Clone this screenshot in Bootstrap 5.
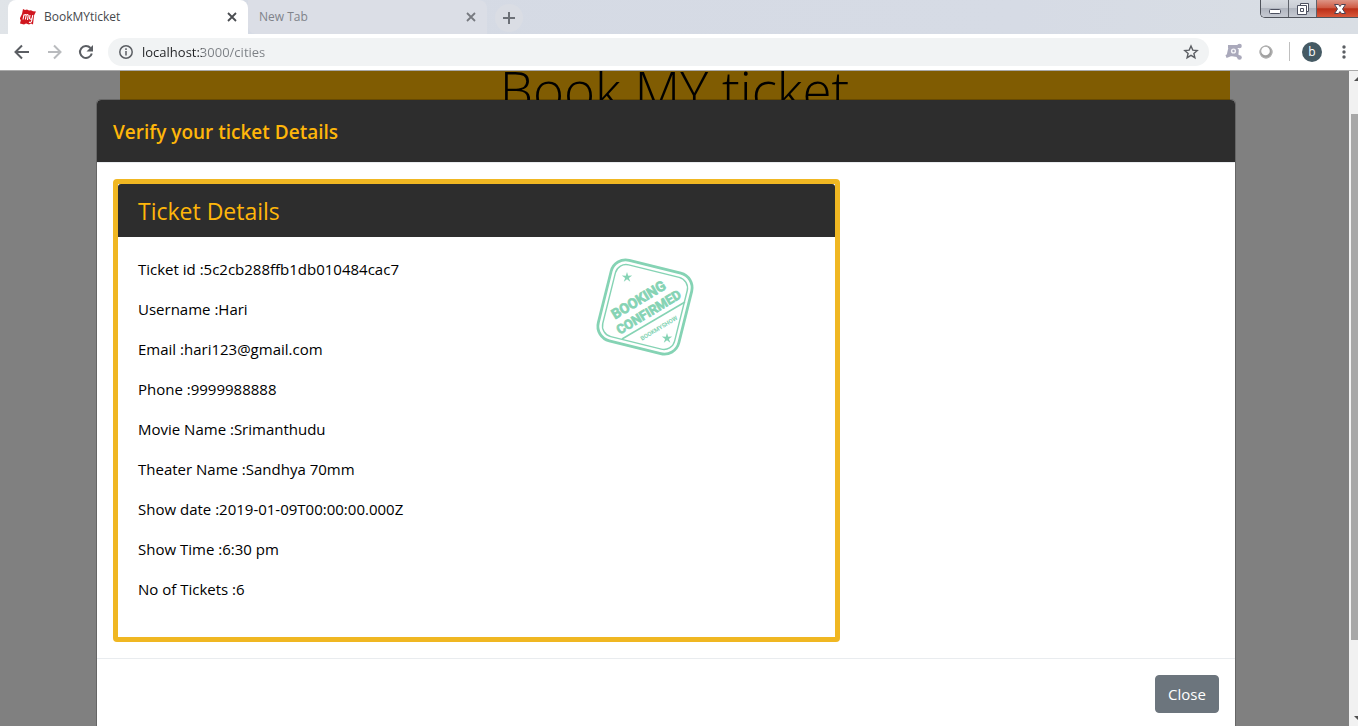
<!DOCTYPE html>
<html lang="en">
<head>
<meta charset="utf-8">
<meta name="viewport" content="width=device-width, initial-scale=1">
<title>BookMYticket</title>
<link href="https://cdn.jsdelivr.net/npm/bootstrap@5.3.0/dist/css/bootstrap.min.css" rel="stylesheet">
<style>
body{font-family:"Open Sans","Noto Sans",sans-serif;font-size:15px;line-height:24px;color:#000}
button{padding:0;border:0;background:none}
svg{display:block;flex:none}
.tab-strip{height:34px;background:linear-gradient(90deg,#e0e4e8 0,#d5dae4 20%,#d6dbe5 75%,#d9dee4 100%);padding-left:8px;font-size:12px}
.tab-item{width:240px;height:34px;padding:0 10px 0 12px;color:#80838a}
.tab-item .tab-name{font-size:12px;color:inherit}
.tab-item.current{background:#fff;border-radius:8px 8px 0 0;color:#45484c}
.tab-item.idle{background:#dbdee6;border-radius:0 8px 0 8px;padding-left:11px;width:239px}
.new-tab{width:28px;height:28px;margin-left:8px;border-radius:50%;background:#dadde4}
.win-keys{height:18px;border:1px solid #4f535b;border-width:0 0 1px 1px;border-radius:0 0 0 5px;overflow:hidden}
.win-keys button{height:17px;width:28px;background:linear-gradient(#d5d9df 0,#c9cdd4 45%,#b0b5bf 50%,#c6cad2 100%);border-right:1px solid #5f636b}
.win-keys button.quit{width:41px;border:0;background:linear-gradient(#dd9486 0,#cf5b45 45%,#bb2f18 52%,#d9583a 100%);padding-left:4px}
.tool-row{height:37px;background:#fff;border-bottom:1px solid #a9a9a9;padding:0 9px 1px 12px}
.omni{height:28px;border-radius:14px;background:#f1f3f4;padding:0 10px}
.omni input{border:0;outline:0;padding:0;font-size:13px;height:20px;-webkit-text-fill-color:transparent;background:linear-gradient(90deg,#202124 60px,#7b7f84 60px);-webkit-background-clip:text;background-clip:text}
.avatar{width:20px;height:20px;margin:0 17px 0 12px;border-radius:50%;background:#455a64;color:#fff;font-size:12px;line-height:19px}
.site{background:#808080;overflow:hidden;min-height:0}
.site-scroll{width:9px;background:#f1f1f1;overflow:hidden}
.site-scroll .thumb{width:17px;margin-left:2px;background:#a8a8a8;flex:0 0 526px}
.banner{max-width:1110px;height:60px;background:#805c02;color:#000}
.banner h1{font-size:53px;line-height:60px;font-weight:300;margin-top:-11px}
.sheet{inset:0;overflow:hidden;padding:28px 17px 0 0}
.sheet .modal-content{max-width:1140px;border:1px solid rgba(0,0,0,.2);border-radius:5px;background:#fff padding-box;color:#000}
.modal-header{background:#2d2d2d;color:#ffb60a;padding:17px 16px 15px;border-bottom:1px solid #e9ecef;border-radius:4px 4px 0 0}
.modal-header h2{font-size:19px;line-height:30px;font-weight:600}
.modal-body{padding:16px}
.modal-body .row{--bs-gutter-x:30px}
.modal-body .row.g-0{--bs-gutter-x:0}
.ticket{border:5px solid #f0b722;border-radius:4px;color:#000}
.ticket .card-header{background:#2d2d2d;color:#ffb60a;padding:13px 20px 11px;border:0;border-radius:3px 3px 0 0}
.ticket h3{font-size:23px;line-height:29px;font-weight:400}
.ticket .card-body{padding:20px}
.modal-footer{padding:16px;border-top:1px solid #e9ecef}
.modal-footer .btn{width:64px;height:38px;padding:0;border-radius:4px;font-size:15px}
</style>
</head>
<body class="vh-100 d-flex flex-column overflow-hidden">
<header>
  <div class="tab-strip d-flex align-items-start">
    <div class="tab-item current d-flex align-items-center">
      <svg width="16" height="16" viewBox="0 0 16 16"><path d="M3 0l2 1 2-.5 2 1 2-.3 2 1 3 .3-2 4-1 9-2-1-2 1-3-1-2 1-4-1 1-4-2 .5L2 5z" fill="#d0161f"/><path d="M3 10.500l1-5M3.900 6.500q1.800-2 2.200 0l-.7 4M6 6.500q1.800-2 2.200 0l-.7 4.500M10 6l-.5 3.500q1 1.500 2.500 0l.8-3.500-1.300 6.500q-1 1.500-2.500.5" fill="none" stroke="#fff" stroke-width="1.100"/></svg>
      <button class="tab-name flex-grow-1 text-start ms-2" type="button">BookMYticket</button>
      <button type="button" aria-label="Close tab"><svg width="12" height="12" viewBox="0 0 12 12"><path d="M2 2l8 8M10 2l-8 8" stroke="#4a4d51" stroke-width="1.800"/></svg></button>
    </div>
    <div class="tab-item idle d-flex align-items-center">
      <button class="tab-name flex-grow-1 text-start" type="button">New Tab</button>
      <button type="button" aria-label="Close tab"><svg width="12" height="12" viewBox="0 0 12 12"><path d="M2 2l8 8M10 2l-8 8" stroke="#777a80" stroke-width="1.800"/></svg></button>
    </div>
    <button class="new-tab d-flex align-items-center justify-content-center mt-1" type="button" aria-label="New tab"><svg width="14" height="14" viewBox="0 0 14 14"><path d="M7 1v12M1 7h12" stroke="#6c7077" stroke-width="2"/></svg></button>
    <div class="win-keys d-flex ms-auto">
      <button type="button" class="d-flex align-items-center justify-content-center" aria-label="Minimize"><svg width="14" height="14" viewBox="0 0 14 14"><rect x="1.500" y="7.500" width="11" height="4" rx="1" fill="#fff" stroke="#4d5160"/></svg></button>
      <button type="button" class="d-flex align-items-center justify-content-center" aria-label="Restore"><svg width="14" height="14" viewBox="0 0 14 14"><g fill="#fff" stroke="#4d5160"><path d="M4.500 1.500h8v8h-8z"/><path d="M1.500 3.500h9v9h-9z"/><path d="M4.500 6.500h3v3h-3z"/></g></svg></button>
      <button type="button" class="quit d-flex align-items-center justify-content-center" aria-label="Close window"><svg width="14" height="14" viewBox="0 0 14 14"><path d="M1.500 2.500h4L7 4.500l1.500-2h4L9.500 7l3 4.500h-4L7 9.500l-1.500 2h-4l3-4.500z" fill="#fff" stroke="#4d4152"/></svg></button>
    </div>
  </div>
  <div class="tool-row d-flex align-items-center">
    <button type="button" aria-label="Back" class="me-3"><svg width="20" height="20" viewBox="0 0 20 20"><path d="M17 10H4M10 3.500L3.500 10l6.500 6.500" fill="none" stroke="#5b5e63" stroke-width="2"/></svg></button>
    <button type="button" aria-label="Forward" class="me-2"><svg width="18" height="20" viewBox="1 0 18 20"><path d="M0 10h13M7 3.500l6.500 6.500L7 16.500" fill="none" stroke="#b9bbbe" stroke-width="2"/></svg></button>
    <button type="button" aria-label="Reload" class="me-2"><svg width="22" height="20" viewBox="0 0 22 20"><path d="M16.500 6A6 6 0 1 0 17.800 11.500" fill="none" stroke="#5b5e63" stroke-width="2"/><path d="M19 3v6.500h-6.500z" fill="#5b5e63"/></svg></button>
    <div class="omni d-flex align-items-center flex-grow-1 ms-1">
      <svg width="16" height="16" viewBox="0 0 16 16"><circle cx="8" cy="8" r="6.200" fill="none" stroke="#5b5e63" stroke-width="1.500"/><path d="M8 7v4.500M8 4.300v1.600" stroke="#5b5e63" stroke-width="1.500"/></svg>
      <input class="flex-grow-1 ms-2" type="text" aria-label="Address" value="localhost:3000/cities">
      <button type="button" aria-label="Bookmark"><svg width="16" height="16" viewBox="0 0 16 16"><path d="M8 2l1.800 4.100 4.400.4-3.300 2.900 1 4.300L8 11.400l-3.900 2.300 1-4.300L1.800 6.500l4.400-.4z" fill="none" stroke="#5b5e63" stroke-width="1.400"/></svg></button>
    </div>
    <button type="button" aria-label="Molecule extension" class="ms-3"><svg width="18" height="18" viewBox="0 0 18 18"><path d="M3 3.500h10l2-1M5 4l-2 9M1 13.500l5-2 6 1 3 2.500M12 6v6" stroke="#aaa9bb" stroke-width="3" fill="none"/><circle cx="8.500" cy="8" r="5" fill="#aaa9bb"/><circle cx="8.500" cy="8" r="2.600" fill="#f4f4f8"/><circle cx="8.500" cy="8" r="1.200" fill="#aaa9bb"/><circle cx="14.500" cy="3" r="2.300" fill="#aaa9bb"/><circle cx="14.500" cy="14.500" r="2.300" fill="#aaa9bb"/></svg></button>
    <button type="button" aria-label="Ring extension" class="ms-3"><svg width="14" height="14" viewBox="0 0 14 14"><circle cx="7" cy="7" r="6.500" fill="#a0a0a0"/><circle cx="6.500" cy="6" r="4.300" fill="#fff"/><circle cx="7" cy="7" r="6" fill="none" stroke="#b5b5b5"/></svg></button>
    <div class="vr ms-3 my-2"></div>
    <button class="avatar text-center" type="button">b</button>
    <button type="button" aria-label="Menu"><svg width="10" height="16" viewBox="0 0 10 16"><g fill="#5b5e63"><circle cx="5" cy="3" r="1.700"/><circle cx="5" cy="8" r="1.700"/><circle cx="5" cy="13" r="1.700"/></g></svg></button>
  </div>
</header>
<div class="d-flex flex-grow-1 overflow-hidden">
  <main class="site position-relative flex-grow-1">
    <div class="banner mx-auto text-center overflow-hidden"><h1>Book MY ticket</h1></div>
    <div class="sheet position-absolute" role="dialog" aria-labelledby="verify">
      <div class="modal-content mx-auto">
        <div class="modal-header"><h2 id="verify" class="mb-0">Verify your ticket Details</h2></div>
        <div class="modal-body">
          <div class="row">
            <div class="col-8">
              <div class="card ticket">
                <div class="card-header"><h3 class="mb-0">Ticket Details</h3></div>
                <div class="card-body">
                  <div class="row g-0">
                    <div class="col-8">
                      <p>Ticket id :5c2cb288ffb1db010484cac7</p>
                      <p>Username :Hari</p>
                      <p>Email :hari123@gmail.com</p>
                      <p>Phone :9999988888</p>
                      <p>Movie Name :Srimanthudu</p>
                      <p>Theater Name :Sandhya 70mm</p>
                      <p>Show date :2019-01-09T00:00:00.000Z</p>
                      <p>Show Time :6:30 pm</p>
                      <p>No of Tickets :6</p>
                    </div>
                    <div class="col-4">
                      <svg width="110" height="110" viewBox="0 0 110 110" role="img" aria-label="Booking confirmed by BookMyShow">
                        <g fill="none" stroke="#85d3b4" transform="rotate(14 55 50)">
                          <rect x="13.500" y="8.500" width="83" height="83" rx="15" stroke-width="2.800"/>
                          <rect x="18" y="13" width="74" height="74" rx="11" stroke-width="1.400"/>
                        </g>
                        <path d="M32 82L95 45" stroke="#85d3b4" stroke-width="1.500"/>
                        <g fill="#85d3b4" stroke="#85d3b4" font-family="Roboto, sans-serif" font-weight="700" text-anchor="middle">
                          <text transform="translate(51 47) rotate(-31)" font-size="14" stroke-width=".7">BOOKING</text>
                          <text transform="translate(61 59) rotate(-31)" font-size="13" stroke-width=".7">CONFIRMED</text>
                          <text transform="translate(70 73) rotate(-31)" font-size="6" stroke="none">BOOKMYSHOW</text>
                        </g>
                        <g fill="#85d3b4"><path id="st" d="M37 15l1.200 3.800 4-.2-3.300 2.300 1.400 3.800-3.300-2.400-3.200 2.400 1.300-3.800-3.300-2.300 4 .2z"/><use href="#st" x="40" y="61"/></g>
                      </svg>
                    </div>
                  </div>
                </div>
              </div>
            </div>
          </div>
        </div>
        <div class="modal-footer"><button type="button" class="btn btn-secondary m-0">Close</button></div>
      </div>
    </div>
  </main>
  <div class="site-scroll d-flex flex-column flex-shrink-0" aria-hidden="true">
    <svg width="17" height="43" viewBox="0 0 17 43"><path d="M5 10l4-4 4 4z" fill="#505050"/></svg>
    <div class="thumb"></div>
    <svg class="mt-auto" width="17" height="17" viewBox="0 0 17 17"><path d="M5 7h8l-4 4z" fill="#505050"/></svg>
  </div>
</div>
<script src="https://cdn.jsdelivr.net/npm/bootstrap@5.3.0/dist/js/bootstrap.bundle.min.js"></script>
</body>
</html>
